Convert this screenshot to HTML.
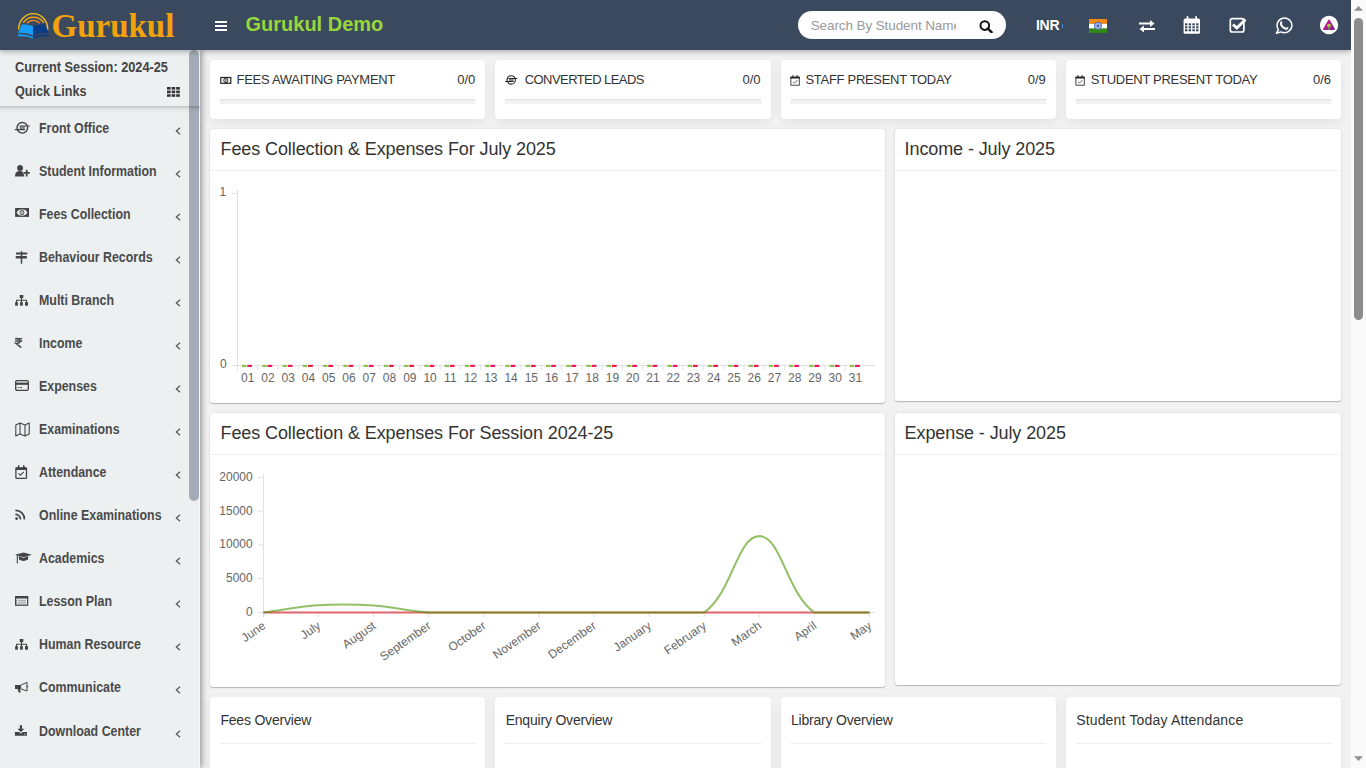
<!DOCTYPE html><html><head><meta charset="utf-8"><style>
*{margin:0;padding:0;box-sizing:border-box}
html,body{width:1366px;height:768px;overflow:hidden;background:#f2f2f2;font-family:"Liberation Sans",sans-serif}
.a,.t,.card,.box,.prog{position:absolute}
.t{white-space:nowrap}
#hdri{position:absolute;left:0;top:0;width:1366px;height:50px;z-index:3}
#hdr{position:absolute;left:0;top:0;width:1351px;height:50px;background:#3b495e;box-shadow:0 1px 6px rgba(0,0,0,.35);z-index:2}
#sb{position:absolute;left:0;top:50px;width:200px;height:718px;background:#ecf0f1;box-shadow:2px 0 6px rgba(0,0,0,.38);border-right:1px solid #f6f8f8}
#sbtop{position:absolute;left:0;top:50px;width:200px;height:56px;background:#ecf0f1}
.card{background:#fff;border-radius:4px;box-shadow:0 3px 10px rgba(0,0,0,.07)}
.box{background:#fff;border-radius:3px;box-shadow:0 1px 1px rgba(0,0,0,.22),0 0 1px rgba(0,0,0,.15),0 0 4px rgba(0,0,0,.06)}
.prog{background:#f2f2f2;box-shadow:inset 0 1px 1px rgba(0,0,0,.08)}
</style></head><body><div id="hdr"></div><div id="hdri">
<svg class="a" style="left:0;top:0" width="60" height="45" viewBox="0 0 60 45">
<path d="M18.6 29.5 A14.6 15.9 0 0 1 47.8 29.5" fill="none" stroke="#f6c21c" stroke-width="1.4"/>
<path d="M23.3 22.8 A12.2 12.2 0 0 1 43.7 22.8" fill="none" stroke="#f2a514" stroke-width="1.4"/>
<path d="M27 23.3 A8.1 8.1 0 0 1 39.6 23.3" fill="none" stroke="#f08c24" stroke-width="1.3"/>
<path d="M21.8 24.2 Q28 24.4 33.1 26.2 L33.1 35.2 Q26 32.6 18 32.9 Z" fill="#169df7"/>
<path d="M18 34.3 Q26 33.9 33.1 37.1 L33.1 38.8 Q26 35.6 18 36.6 Z" fill="#169df7"/>
<path d="M44.6 24.2 Q38.4 24.4 33.1 26.2 L33.1 35.2 Q40.4 32.6 48.4 32.9 Z" fill="#0a3c88"/>
<path d="M48.4 34.3 Q40.4 33.9 33.1 37.1 L33.1 38.8 Q40.4 35.6 48.4 36.6 Z" fill="#0a3c88"/>
</svg>
<div class="t" style="left:51.5px;top:6.19px;font-size:33px;line-height:41px;font-weight:bold;color:#f2a20c;letter-spacing:0px;font-family:'Liberation Serif', serif;">Gurukul</div>
<div class="a" style="left:215px;top:21px;width:12px;height:2px;background:#fff"></div>
<div class="a" style="left:215px;top:25px;width:12px;height:2px;background:#fff"></div>
<div class="a" style="left:215px;top:29px;width:12px;height:2px;background:#fff"></div>
<div class="t" style="left:245.5px;top:11.89px;font-size:20px;line-height:25px;font-weight:bold;color:#97d73b;letter-spacing:0px;font-family:'Liberation Sans', sans-serif;">Gurukul Demo</div>
<div class="a" style="left:798px;top:11px;width:208px;height:28px;border-radius:14px;background:#fff"></div>
<div class="a" style="left:810px;top:11px;width:146px;height:28px;overflow:hidden"><div class="t" style="left:0.7px;top:6.14px;font-size:13.5px;line-height:17px;font-weight:normal;color:#9a9a9a;letter-spacing:-0.1px;font-family:'Liberation Sans', sans-serif;">Search By Student Name</div></div>
<svg class="a" style="left:979px;top:20px" width="14" height="13" viewBox="0 0 14 13">
<circle cx="5.8" cy="5.6" r="4.3" fill="none" stroke="#111" stroke-width="2"/>
<path d="M8.8 8.6 L12.6 12.2" stroke="#111" stroke-width="2.4" stroke-linecap="round"/></svg>
<div class="t" style="left:1036px;top:16.47px;font-size:14px;line-height:18px;font-weight:bold;color:#fff;letter-spacing:-0.3px;font-family:'Liberation Sans', sans-serif;">INR</div>
<div class="a" style="left:1062px;top:24px;width:1px;height:4px;background:#4a90e2"></div>
<svg class="a" style="left:1089px;top:0" width="18" height="40" viewBox="0 0 18 40">
<rect y="19" width="18" height="4.8" fill="#f28a12"/><rect y="23.8" width="18" height="4.8" fill="#fff"/><rect y="28.6" width="18" height="4.3" fill="#2f8c10"/>
<circle cx="9" cy="25.8" r="3.6" fill="#dfe6f7" stroke="#3a5cb8" stroke-width="0.9"/><path d="M9 25.8 L12.30 25.80" stroke="#3a5cb8" stroke-width="0.5"/><path d="M9 25.8 L11.86 27.45" stroke="#3a5cb8" stroke-width="0.5"/><path d="M9 25.8 L10.65 28.66" stroke="#3a5cb8" stroke-width="0.5"/><path d="M9 25.8 L9.00 29.10" stroke="#3a5cb8" stroke-width="0.5"/><path d="M9 25.8 L7.35 28.66" stroke="#3a5cb8" stroke-width="0.5"/><path d="M9 25.8 L6.14 27.45" stroke="#3a5cb8" stroke-width="0.5"/><path d="M9 25.8 L5.70 25.80" stroke="#3a5cb8" stroke-width="0.5"/><path d="M9 25.8 L6.14 24.15" stroke="#3a5cb8" stroke-width="0.5"/><path d="M9 25.8 L7.35 22.94" stroke="#3a5cb8" stroke-width="0.5"/><path d="M9 25.8 L9.00 22.50" stroke="#3a5cb8" stroke-width="0.5"/><path d="M9 25.8 L10.65 22.94" stroke="#3a5cb8" stroke-width="0.5"/><path d="M9 25.8 L11.86 24.15" stroke="#3a5cb8" stroke-width="0.5"/><circle cx="9" cy="25.8" r="0.9" fill="#3a5cb8"/></svg>
<svg class="a" style="left:1138px;top:19px" width="18" height="14" viewBox="0 0 18 14">
<path d="M1 4.5 H13" stroke="#fff" stroke-width="2"/><path d="M12 1 L16.5 4.5 L12 8 Z" fill="#fff"/>
<path d="M17 10 H5" stroke="#fff" stroke-width="2"/><path d="M6 6.5 L1.5 10 L6 13.5 Z" fill="#fff"/></svg>
<svg class="a" style="left:1183px;top:15px" width="18" height="20" viewBox="0 0 18 20">
<rect x="0.6" y="3.6" width="16.4" height="15.2" rx="1.6" fill="#fff"/>
<rect x="3.6" y="0.9" width="1.8" height="4" rx="0.9" fill="#fff"/><rect x="12.2" y="0.9" width="1.8" height="4" rx="0.9" fill="#fff"/><rect x="2.00" y="8.30" width="2.4" height="2.1" fill="#3b495e"/><rect x="2.00" y="11.25" width="2.4" height="2.1" fill="#3b495e"/><rect x="2.00" y="14.20" width="2.4" height="2.1" fill="#3b495e"/><rect x="5.70" y="8.30" width="2.4" height="2.1" fill="#3b495e"/><rect x="5.70" y="11.25" width="2.4" height="2.1" fill="#3b495e"/><rect x="5.70" y="14.20" width="2.4" height="2.1" fill="#3b495e"/><rect x="9.40" y="8.30" width="2.4" height="2.1" fill="#3b495e"/><rect x="9.40" y="11.25" width="2.4" height="2.1" fill="#3b495e"/><rect x="9.40" y="14.20" width="2.4" height="2.1" fill="#3b495e"/><rect x="13.10" y="8.30" width="2.4" height="2.1" fill="#3b495e"/><rect x="13.10" y="11.25" width="2.4" height="2.1" fill="#3b495e"/><rect x="13.10" y="14.20" width="2.4" height="2.1" fill="#3b495e"/></svg>
<svg class="a" style="left:1229px;top:17px" width="19" height="16" viewBox="0 0 19 16">
<rect x="1.3" y="1.6" width="13.6" height="13.4" rx="2" fill="none" stroke="#fff" stroke-width="1.7"/>
<path d="M4 7.5 L7.8 11 L16.5 2.5" fill="none" stroke="#fff" stroke-width="2.8"/></svg>
<svg class="a" style="left:1275px;top:17px" width="18" height="17" viewBox="0 0 18 17">
<path d="M3.4 12.6 A7.4 7.4 0 1 1 6 14.9 L1.5 16.2 Z" fill="none" stroke="#fff" stroke-width="1.5" stroke-linejoin="round"/>
<path d="M6.4 5.3 Q5.5 6.2 6.2 8 Q7.6 10.6 10.6 11.7 Q12 12.1 12.5 11.1" fill="none" stroke="#fff" stroke-width="2" stroke-linecap="round"/></svg>
<svg class="a" style="left:1319px;top:15px" width="20" height="20" viewBox="0 0 20 20">
<circle cx="10" cy="10" r="9.2" fill="#fff"/>
<defs><linearGradient id="ag" x1="0" y1="0" x2="1" y2="1"><stop offset="0" stop-color="#d0158c"/><stop offset="1" stop-color="#8a1f90"/></linearGradient></defs><path d="M10 5.2 L15.2 14.2 H4.8 Z" fill="url(#ag)" stroke="url(#ag)" stroke-width="1.4" stroke-linejoin="round"/>
<circle cx="10" cy="10.6" r="1.8" fill="#b5d93a"/><rect x="9.3" y="10.8" width="1.4" height="3.9" fill="#5fb03c"/></svg>
</div>
<div id="sb"></div>
<div id="sbtop"></div>
<div class="t" style="left:15.4px;top:58.37px;font-size:14px;line-height:18px;font-weight:bold;color:#444;letter-spacing:0px;font-family:'Liberation Sans', sans-serif;transform:scaleX(0.91);transform-origin:0 0;">Current Session: 2024-25</div>
<div class="t" style="left:15.4px;top:82.37px;font-size:14px;line-height:18px;font-weight:bold;color:#444;letter-spacing:0px;font-family:'Liberation Sans', sans-serif;transform:scaleX(0.9);transform-origin:0 0;">Quick Links</div>
<svg class="a" style="left:167px;top:87px" width="14" height="10" viewBox="0 0 14 10"><rect x="0.0" y="0.0" width="3.6" height="2.6" fill="#333"/><rect x="0.0" y="3.6" width="3.6" height="2.6" fill="#333"/><rect x="0.0" y="7.2" width="3.6" height="2.6" fill="#333"/><rect x="4.6" y="0.0" width="3.6" height="2.6" fill="#333"/><rect x="4.6" y="3.6" width="3.6" height="2.6" fill="#333"/><rect x="4.6" y="7.2" width="3.6" height="2.6" fill="#333"/><rect x="9.2" y="0.0" width="3.6" height="2.6" fill="#333"/><rect x="9.2" y="3.6" width="3.6" height="2.6" fill="#333"/><rect x="9.2" y="7.2" width="3.6" height="2.6" fill="#333"/></svg>
<svg class="a" style="left:15px;top:121px" width="18" height="15" viewBox="0 0 18 15" overflow="visible"><circle cx="7.3" cy="6.8" r="5.3" fill="none" stroke="#444" stroke-width="1.4"/><rect x="4.6" y="5.2" width="5.2" height="3.3" fill="#888"/><path d="M4.6 5 H14.8 M-0.2 8.7 H9.9" stroke="#444" stroke-width="1.2"/></svg>
<div class="t" style="left:38.6px;top:119.37px;font-size:14px;line-height:18px;font-weight:bold;color:#4a4a4a;letter-spacing:0px;font-family:'Liberation Sans', sans-serif;transform:scaleX(0.885);transform-origin:0 0;">Front Office</div>
<svg class="a" style="left:175px;top:127px" width="6" height="8" viewBox="0 0 6 8"><path d="M5 0.7 L1.3 4 L5 7.3" fill="none" stroke="#555" stroke-width="1.2"/></svg>
<svg class="a" style="left:15px;top:164px" width="18" height="15" viewBox="0 0 18 15" overflow="visible"><circle cx="5.1" cy="4" r="2.9" fill="#444"/><path d="M0 12.5 Q0 7 4.6 7 Q8.8 7 9.2 11 V12.5 Z" fill="#444"/><path d="M8.6 8.9 H14.8 M11.7 5.7 V12.5" stroke="#ecf0f1" stroke-width="3.2"/><path d="M8.6 8.9 H14.8 M11.7 5.7 V12.5" stroke="#444" stroke-width="1.7"/></svg>
<div class="t" style="left:38.6px;top:162.37px;font-size:14px;line-height:18px;font-weight:bold;color:#4a4a4a;letter-spacing:0px;font-family:'Liberation Sans', sans-serif;transform:scaleX(0.885);transform-origin:0 0;">Student Information</div>
<svg class="a" style="left:175px;top:170px" width="6" height="8" viewBox="0 0 6 8"><path d="M5 0.7 L1.3 4 L5 7.3" fill="none" stroke="#555" stroke-width="1.2"/></svg>
<svg class="a" style="left:15px;top:207px" width="18" height="15" viewBox="0 0 18 15" overflow="visible"><rect x="0.1" y="1" width="13.9" height="8.9" fill="#444"/><path d="M1.6 5.45 Q3.3 2.2 7 2.2 Q10.7 2.2 12.4 5.45 Q10.7 8.7 7 8.7 Q3.3 8.7 1.6 5.45 Z" fill="#ecf0f1"/><ellipse cx="7" cy="5.45" rx="1.9" ry="2.4" fill="none" stroke="#444" stroke-width="0.9"/><rect x="6.6" y="4.2" width="0.8" height="2.5" fill="#444"/></svg>
<div class="t" style="left:38.6px;top:205.37px;font-size:14px;line-height:18px;font-weight:bold;color:#4a4a4a;letter-spacing:0px;font-family:'Liberation Sans', sans-serif;transform:scaleX(0.885);transform-origin:0 0;">Fees Collection</div>
<svg class="a" style="left:175px;top:213px" width="6" height="8" viewBox="0 0 6 8"><path d="M5 0.7 L1.3 4 L5 7.3" fill="none" stroke="#555" stroke-width="1.2"/></svg>
<svg class="a" style="left:15px;top:250px" width="18" height="15" viewBox="0 0 18 15" overflow="visible"><path d="M6.5 1.2 V13.7" stroke="#444" stroke-width="1.5"/><path d="M1 2.5 H11.5 L12.7 3.5 L11.5 4.5 H1 Z" fill="#444"/><path d="M11.9 6 H1.4 L0.2 7.25 L1.4 8.5 H11.9 Z" fill="#444"/></svg>
<div class="t" style="left:38.6px;top:248.37px;font-size:14px;line-height:18px;font-weight:bold;color:#4a4a4a;letter-spacing:0px;font-family:'Liberation Sans', sans-serif;transform:scaleX(0.885);transform-origin:0 0;">Behaviour Records</div>
<svg class="a" style="left:175px;top:256px" width="6" height="8" viewBox="0 0 6 8"><path d="M5 0.7 L1.3 4 L5 7.3" fill="none" stroke="#555" stroke-width="1.2"/></svg>
<svg class="a" style="left:15px;top:293px" width="18" height="15" viewBox="0 0 18 15" overflow="visible"><rect x="4.7" y="2" width="3.6" height="3" fill="#444"/><path d="M6.5 5 V7.3 M1.5 9 V7.3 H11.5 V9 M6.5 7.3 V9" fill="none" stroke="#444" stroke-width="1.1"/><rect x="0.1" y="9.1" width="2.8" height="3.6" rx="0.4" fill="#444"/><rect x="5" y="9.1" width="2.8" height="3.6" rx="0.4" fill="#444"/><rect x="10" y="9.1" width="3" height="3.6" rx="0.4" fill="#444"/></svg>
<div class="t" style="left:38.6px;top:291.37px;font-size:14px;line-height:18px;font-weight:bold;color:#4a4a4a;letter-spacing:0px;font-family:'Liberation Sans', sans-serif;transform:scaleX(0.885);transform-origin:0 0;">Multi Branch</div>
<svg class="a" style="left:175px;top:299px" width="6" height="8" viewBox="0 0 6 8"><path d="M5 0.7 L1.3 4 L5 7.3" fill="none" stroke="#555" stroke-width="1.2"/></svg>
<svg class="a" style="left:15px;top:336px" width="18" height="15" viewBox="0 0 18 15" overflow="visible"><path d="M0 2.6 H7.2 M0 5 H7.2" stroke="#444" stroke-width="1.3"/><path d="M0.6 2.6 Q5 2.4 5 5 Q5 7.5 0.8 7.4 L6.3 11.7" fill="none" stroke="#444" stroke-width="1.5"/></svg>
<div class="t" style="left:38.6px;top:334.37px;font-size:14px;line-height:18px;font-weight:bold;color:#4a4a4a;letter-spacing:0px;font-family:'Liberation Sans', sans-serif;transform:scaleX(0.885);transform-origin:0 0;">Income</div>
<svg class="a" style="left:175px;top:342px" width="6" height="8" viewBox="0 0 6 8"><path d="M5 0.7 L1.3 4 L5 7.3" fill="none" stroke="#555" stroke-width="1.2"/></svg>
<svg class="a" style="left:15px;top:379px" width="18" height="15" viewBox="0 0 18 15" overflow="visible"><rect x="0.7" y="1.7" width="12.6" height="9.6" rx="1.2" fill="none" stroke="#444" stroke-width="1.3"/><rect x="0.7" y="3.6" width="12.6" height="2.2" fill="#444"/><path d="M2.5 8.6 H4 M4.8 8.6 H7" stroke="#444" stroke-width="0.9"/></svg>
<div class="t" style="left:38.6px;top:377.37px;font-size:14px;line-height:18px;font-weight:bold;color:#4a4a4a;letter-spacing:0px;font-family:'Liberation Sans', sans-serif;transform:scaleX(0.885);transform-origin:0 0;">Expenses</div>
<svg class="a" style="left:175px;top:385px" width="6" height="8" viewBox="0 0 6 8"><path d="M5 0.7 L1.3 4 L5 7.3" fill="none" stroke="#555" stroke-width="1.2"/></svg>
<svg class="a" style="left:15px;top:422px" width="18" height="15" viewBox="0 0 18 15" overflow="visible"><path d="M0.8 3 L5 1 L10 3 L14.2 1 V12 L10 14 L5 12 L0.8 14 Z M5 1 V12 M10 3 V14" fill="none" stroke="#444" stroke-width="1.1" stroke-linejoin="round"/></svg>
<div class="t" style="left:38.6px;top:420.37px;font-size:14px;line-height:18px;font-weight:bold;color:#4a4a4a;letter-spacing:0px;font-family:'Liberation Sans', sans-serif;transform:scaleX(0.885);transform-origin:0 0;">Examinations</div>
<svg class="a" style="left:175px;top:428px" width="6" height="8" viewBox="0 0 6 8"><path d="M5 0.7 L1.3 4 L5 7.3" fill="none" stroke="#555" stroke-width="1.2"/></svg>
<svg class="a" style="left:15px;top:465px" width="18" height="15" viewBox="0 0 18 15" overflow="visible"><rect x="0.9" y="3" width="10.6" height="10.3" rx="0.6" fill="none" stroke="#444" stroke-width="1.3"/><rect x="0.9" y="2.6" width="10.6" height="2.4" fill="#444"/><path d="M3.6 0.8 V3.2 M8.8 0.8 V3.2" stroke="#444" stroke-width="1.5" stroke-linecap="round"/><path d="M3.5 8.3 L5.4 10.2 L8.8 6.9" fill="none" stroke="#444" stroke-width="1.1"/></svg>
<div class="t" style="left:38.6px;top:463.37px;font-size:14px;line-height:18px;font-weight:bold;color:#4a4a4a;letter-spacing:0px;font-family:'Liberation Sans', sans-serif;transform:scaleX(0.885);transform-origin:0 0;">Attendance</div>
<svg class="a" style="left:175px;top:471px" width="6" height="8" viewBox="0 0 6 8"><path d="M5 0.7 L1.3 4 L5 7.3" fill="none" stroke="#555" stroke-width="1.2"/></svg>
<svg class="a" style="left:15px;top:508px" width="18" height="15" viewBox="0 0 18 15" overflow="visible"><circle cx="1.6" cy="10.6" r="1.4" fill="#444"/><path d="M0.4 6.3 A4.8 4.8 0 0 1 5.4 11.4 M0.4 2.3 A8.8 8.8 0 0 1 9.4 11.4" fill="none" stroke="#444" stroke-width="1.7"/></svg>
<div class="t" style="left:38.6px;top:506.37px;font-size:14px;line-height:18px;font-weight:bold;color:#4a4a4a;letter-spacing:0px;font-family:'Liberation Sans', sans-serif;transform:scaleX(0.885);transform-origin:0 0;">Online Examinations</div>
<svg class="a" style="left:175px;top:514px" width="6" height="8" viewBox="0 0 6 8"><path d="M5 0.7 L1.3 4 L5 7.3" fill="none" stroke="#555" stroke-width="1.2"/></svg>
<svg class="a" style="left:15px;top:551px" width="18" height="15" viewBox="0 0 18 15" overflow="visible"><path d="M0 3.7 L8.5 1.5 L17 3.7 L8.5 6.3 Z" fill="#444"/><path d="M3.9 5 V8.6 Q8.5 11.4 13.1 8.6 V5 L8.5 6.9 Z" fill="#444"/><path d="M2.3 4 V12.5" stroke="#444" stroke-width="1.1"/></svg>
<div class="t" style="left:38.6px;top:549.37px;font-size:14px;line-height:18px;font-weight:bold;color:#4a4a4a;letter-spacing:0px;font-family:'Liberation Sans', sans-serif;transform:scaleX(0.885);transform-origin:0 0;">Academics</div>
<svg class="a" style="left:175px;top:557px" width="6" height="8" viewBox="0 0 6 8"><path d="M5 0.7 L1.3 4 L5 7.3" fill="none" stroke="#555" stroke-width="1.2"/></svg>
<svg class="a" style="left:15px;top:594px" width="18" height="15" viewBox="0 0 18 15" overflow="visible"><rect x="0.6" y="2.6" width="12" height="8.6" fill="none" stroke="#444" stroke-width="1.2"/><rect x="0" y="2" width="13.2" height="2.5" fill="#444"/><path d="M2.8 6.3 H11 M2.8 8.1 H11 M2.8 9.9 H11" stroke="#9a9a9a" stroke-width="0.9"/><path d="M1.3 6.3 H2 M1.3 8.1 H2 M1.3 9.9 H2" stroke="#444" stroke-width="0.9"/></svg>
<div class="t" style="left:38.6px;top:592.37px;font-size:14px;line-height:18px;font-weight:bold;color:#4a4a4a;letter-spacing:0px;font-family:'Liberation Sans', sans-serif;transform:scaleX(0.885);transform-origin:0 0;">Lesson Plan</div>
<svg class="a" style="left:175px;top:600px" width="6" height="8" viewBox="0 0 6 8"><path d="M5 0.7 L1.3 4 L5 7.3" fill="none" stroke="#555" stroke-width="1.2"/></svg>
<svg class="a" style="left:15px;top:637px" width="18" height="15" viewBox="0 0 18 15" overflow="visible"><rect x="4.7" y="2" width="3.6" height="3" fill="#444"/><path d="M6.5 5 V7.3 M1.5 9 V7.3 H11.5 V9 M6.5 7.3 V9" fill="none" stroke="#444" stroke-width="1.1"/><rect x="0.1" y="9.1" width="2.8" height="3.6" rx="0.4" fill="#444"/><rect x="5" y="9.1" width="2.8" height="3.6" rx="0.4" fill="#444"/><rect x="10" y="9.1" width="3" height="3.6" rx="0.4" fill="#444"/></svg>
<div class="t" style="left:38.6px;top:635.37px;font-size:14px;line-height:18px;font-weight:bold;color:#4a4a4a;letter-spacing:0px;font-family:'Liberation Sans', sans-serif;transform:scaleX(0.885);transform-origin:0 0;">Human Resource</div>
<svg class="a" style="left:175px;top:643px" width="6" height="8" viewBox="0 0 6 8"><path d="M5 0.7 L1.3 4 L5 7.3" fill="none" stroke="#555" stroke-width="1.2"/></svg>
<svg class="a" style="left:15px;top:680px" width="18" height="15" viewBox="0 0 18 15" overflow="visible"><rect x="0" y="5" width="5.6" height="4" fill="#444"/><path d="M2.6 8.8 H5 L5.7 12.5 H3.6 Z" fill="#444"/><path d="M5.6 5.2 L12 2.3 V11 L5.6 8.8 Z" fill="none" stroke="#444" stroke-width="1"/><path d="M12.2 5.6 Q13.3 6.6 12.2 7.6" fill="none" stroke="#444" stroke-width="0.9"/></svg>
<div class="t" style="left:38.6px;top:678.37px;font-size:14px;line-height:18px;font-weight:bold;color:#4a4a4a;letter-spacing:0px;font-family:'Liberation Sans', sans-serif;transform:scaleX(0.885);transform-origin:0 0;">Communicate</div>
<svg class="a" style="left:175px;top:686px" width="6" height="8" viewBox="0 0 6 8"><path d="M5 0.7 L1.3 4 L5 7.3" fill="none" stroke="#555" stroke-width="1.2"/></svg>
<svg class="a" style="left:15px;top:724px" width="18" height="15" viewBox="0 0 18 15" overflow="visible"><rect x="4.8" y="1.2" width="2.2" height="4.5" fill="#444"/><path d="M2.5 4.8 H9.3 L5.9 8.2 Z" fill="#444"/><path d="M-0.1 8 H4.3 L5.9 9.8 L7.5 8 H12 V11.7 H-0.1 Z" fill="#444"/><rect x="9" y="9.7" width="1" height="0.9" fill="#bbb"/><rect x="10.5" y="9.7" width="1" height="0.9" fill="#bbb"/></svg>
<div class="t" style="left:38.6px;top:722.37px;font-size:14px;line-height:18px;font-weight:bold;color:#4a4a4a;letter-spacing:0px;font-family:'Liberation Sans', sans-serif;transform:scaleX(0.885);transform-origin:0 0;">Download Center</div>
<svg class="a" style="left:175px;top:730px" width="6" height="8" viewBox="0 0 6 8"><path d="M5 0.7 L1.3 4 L5 7.3" fill="none" stroke="#555" stroke-width="1.2"/></svg>
<div class="a" style="left:189px;top:50px;width:10px;height:451px;border-radius:5px;background:#a3abb7"></div>
<div class="a" style="left:0;top:106px;width:200px;height:7px;background:linear-gradient(rgba(0,0,0,.2),rgba(0,0,0,.06) 40%,rgba(0,0,0,0))"></div>
<div class="card" style="left:210.0px;top:60px;width:275.25px;height:58.5px"></div>
<svg class="a" style="left:219.60px;top:68px" width="16" height="22" viewBox="0 0 16 22"><rect x="0.8" y="9.5" width="10" height="5.8" fill="none" stroke="#222" stroke-width="1.2"/><ellipse cx="5.8" cy="12.4" rx="2" ry="2.4" fill="none" stroke="#222" stroke-width="1"/><rect x="5.4" y="11" width="0.9" height="2.8" fill="#222"/></svg>
<div class="t" style="left:236.6px;top:71.90px;font-size:13px;line-height:16px;font-weight:normal;color:#333;letter-spacing:-0.3px;font-family:'Liberation Sans', sans-serif;">FEES AWAITING PAYMENT</div>
<div class="t" style="right:890.75px;top:71.90px;font-size:13px;line-height:16px;color:#333">0/0</div>
<div class="prog" style="left:220.0px;top:99px;width:255.25px;height:5px"></div>
<div class="card" style="left:495.25px;top:60px;width:275.25px;height:58.5px"></div>
<svg class="a" style="left:504.85px;top:68px" width="16" height="22" viewBox="0 0 16 22"><circle cx="6.2" cy="11.9" r="4.2" fill="none" stroke="#222" stroke-width="1.1"/><rect x="4" y="10.6" width="4.6" height="2.8" fill="#888"/><path d="M3.5 10.5 H12.2 M0.2 13.5 H8.6" stroke="#222" stroke-width="1"/></svg>
<div class="t" style="left:524.75px;top:71.90px;font-size:13px;line-height:16px;font-weight:normal;color:#333;letter-spacing:-0.57px;font-family:'Liberation Sans', sans-serif;">CONVERTED LEADS</div>
<div class="t" style="right:605.5px;top:71.90px;font-size:13px;line-height:16px;color:#333">0/0</div>
<div class="prog" style="left:505.25px;top:99px;width:255.25px;height:5px"></div>
<div class="card" style="left:780.5px;top:60px;width:275.25px;height:58.5px"></div>
<svg class="a" style="left:790.10px;top:68px" width="16" height="22" viewBox="0 0 16 22"><rect x="0.9" y="9.3" width="8.4" height="7.9" fill="none" stroke="#333" stroke-width="0.9"/><rect x="0.5" y="8.6" width="9.2" height="1.9" fill="#222"/><path d="M2.9 7 V9 M7.1 7 V9" stroke="#333" stroke-width="1"/><path d="M3 13.8 L4.4 15.2 L7.4 12" fill="none" stroke="#555" stroke-width="0.9"/></svg>
<div class="t" style="left:805.5px;top:71.90px;font-size:13px;line-height:16px;font-weight:normal;color:#333;letter-spacing:-0.3px;font-family:'Liberation Sans', sans-serif;">STAFF PRESENT TODAY</div>
<div class="t" style="right:320.25px;top:71.90px;font-size:13px;line-height:16px;color:#333">0/9</div>
<div class="prog" style="left:790.5px;top:99px;width:255.25px;height:5px"></div>
<div class="card" style="left:1065.75px;top:60px;width:275.25px;height:58.5px"></div>
<svg class="a" style="left:1075.35px;top:68px" width="16" height="22" viewBox="0 0 16 22"><rect x="0.9" y="9.3" width="8.4" height="7.9" fill="none" stroke="#333" stroke-width="0.9"/><rect x="0.5" y="8.6" width="9.2" height="1.9" fill="#222"/><path d="M2.9 7 V9 M7.1 7 V9" stroke="#333" stroke-width="1"/><path d="M3 13.8 L4.4 15.2 L7.4 12" fill="none" stroke="#555" stroke-width="0.9"/></svg>
<div class="t" style="left:1090.75px;top:71.90px;font-size:13px;line-height:16px;font-weight:normal;color:#333;letter-spacing:-0.3px;font-family:'Liberation Sans', sans-serif;">STUDENT PRESENT TODAY</div>
<div class="t" style="right:35.0px;top:71.90px;font-size:13px;line-height:16px;color:#333">0/6</div>
<div class="prog" style="left:1075.75px;top:99px;width:255.25px;height:5px"></div>
<div class="box" style="left:210px;top:129px;width:675px;height:274px"></div>
<div class="t" style="left:220.5px;top:138.05px;font-size:18px;line-height:22px;font-weight:normal;color:#333;letter-spacing:-0.1px;font-family:'Liberation Sans', sans-serif;">Fees Collection &amp; Expenses For July 2025</div>
<div class="a" style="left:210px;top:170px;width:675px;height:1px;background:#f0f0f0"></div>
<div class="box" style="left:895px;top:129px;width:446px;height:272px"></div>
<div class="t" style="left:904.6px;top:138.05px;font-size:18px;line-height:22px;font-weight:normal;color:#333;letter-spacing:-0.1px;font-family:'Liberation Sans', sans-serif;">Income - July 2025</div>
<div class="a" style="left:895px;top:170px;width:446px;height:1px;background:#f0f0f0"></div>
<div class="box" style="left:210px;top:413px;width:675px;height:274px"></div>
<div class="t" style="left:220.5px;top:422.05px;font-size:18px;line-height:22px;font-weight:normal;color:#333;letter-spacing:-0.1px;font-family:'Liberation Sans', sans-serif;">Fees Collection &amp; Expenses For Session 2024-25</div>
<div class="a" style="left:210px;top:454px;width:675px;height:1px;background:#f0f0f0"></div>
<div class="box" style="left:895px;top:413px;width:446px;height:272px"></div>
<div class="t" style="left:904.6px;top:422.05px;font-size:18px;line-height:22px;font-weight:normal;color:#333;letter-spacing:-0.1px;font-family:'Liberation Sans', sans-serif;">Expense - July 2025</div>
<div class="a" style="left:895px;top:454px;width:446px;height:1px;background:#f0f0f0"></div>
<svg class="a" style="left:0;top:0" width="1366" height="768" viewBox="0 0 1366 768"><path d="M237.5 190 V370 M232 365.5 H875 M232 193.5 H237.5" stroke="#e1e1e1" stroke-width="1" fill="none"/><path d="M237.50 365.5 V370 M257.76 365.5 V370 M278.02 365.5 V370 M298.28 365.5 V370 M318.54 365.5 V370 M338.80 365.5 V370 M359.06 365.5 V370 M379.32 365.5 V370 M399.58 365.5 V370 M419.84 365.5 V370 M440.10 365.5 V370 M460.36 365.5 V370 M480.62 365.5 V370 M500.88 365.5 V370 M521.14 365.5 V370 M541.40 365.5 V370 M561.66 365.5 V370 M581.92 365.5 V370 M602.18 365.5 V370 M622.44 365.5 V370 M642.70 365.5 V370 M662.96 365.5 V370 M683.22 365.5 V370 M703.48 365.5 V370 M723.74 365.5 V370 M744.00 365.5 V370 M764.26 365.5 V370 M784.52 365.5 V370 M804.78 365.5 V370 M825.04 365.5 V370 M845.30 365.5 V370 " stroke="#e1e1e1" stroke-width="1"/><rect x="242.00" y="364.8" width="4.4" height="2.2" fill="#8cc152"/><rect x="247.30" y="364.8" width="4.7" height="2.2" fill="#e9195a"/><text x="247.73" y="382" text-anchor="middle" font-size="12" fill="#666" font-family="Liberation Sans">01</text><rect x="262.26" y="364.8" width="4.4" height="2.2" fill="#8cc152"/><rect x="267.56" y="364.8" width="4.7" height="2.2" fill="#e9195a"/><text x="267.99" y="382" text-anchor="middle" font-size="12" fill="#666" font-family="Liberation Sans">02</text><rect x="282.52" y="364.8" width="4.4" height="2.2" fill="#8cc152"/><rect x="287.82" y="364.8" width="4.7" height="2.2" fill="#e9195a"/><text x="288.25" y="382" text-anchor="middle" font-size="12" fill="#666" font-family="Liberation Sans">03</text><rect x="302.78" y="364.8" width="4.4" height="2.2" fill="#8cc152"/><rect x="308.08" y="364.8" width="4.7" height="2.2" fill="#e9195a"/><text x="308.51" y="382" text-anchor="middle" font-size="12" fill="#666" font-family="Liberation Sans">04</text><rect x="323.04" y="364.8" width="4.4" height="2.2" fill="#8cc152"/><rect x="328.34" y="364.8" width="4.7" height="2.2" fill="#e9195a"/><text x="328.77" y="382" text-anchor="middle" font-size="12" fill="#666" font-family="Liberation Sans">05</text><rect x="343.30" y="364.8" width="4.4" height="2.2" fill="#8cc152"/><rect x="348.60" y="364.8" width="4.7" height="2.2" fill="#e9195a"/><text x="349.03" y="382" text-anchor="middle" font-size="12" fill="#666" font-family="Liberation Sans">06</text><rect x="363.56" y="364.8" width="4.4" height="2.2" fill="#8cc152"/><rect x="368.86" y="364.8" width="4.7" height="2.2" fill="#e9195a"/><text x="369.29" y="382" text-anchor="middle" font-size="12" fill="#666" font-family="Liberation Sans">07</text><rect x="383.82" y="364.8" width="4.4" height="2.2" fill="#8cc152"/><rect x="389.12" y="364.8" width="4.7" height="2.2" fill="#e9195a"/><text x="389.55" y="382" text-anchor="middle" font-size="12" fill="#666" font-family="Liberation Sans">08</text><rect x="404.08" y="364.8" width="4.4" height="2.2" fill="#8cc152"/><rect x="409.38" y="364.8" width="4.7" height="2.2" fill="#e9195a"/><text x="409.81" y="382" text-anchor="middle" font-size="12" fill="#666" font-family="Liberation Sans">09</text><rect x="424.34" y="364.8" width="4.4" height="2.2" fill="#8cc152"/><rect x="429.64" y="364.8" width="4.7" height="2.2" fill="#e9195a"/><text x="430.07" y="382" text-anchor="middle" font-size="12" fill="#666" font-family="Liberation Sans">10</text><rect x="444.60" y="364.8" width="4.4" height="2.2" fill="#8cc152"/><rect x="449.90" y="364.8" width="4.7" height="2.2" fill="#e9195a"/><text x="450.33" y="382" text-anchor="middle" font-size="12" fill="#666" font-family="Liberation Sans">11</text><rect x="464.86" y="364.8" width="4.4" height="2.2" fill="#8cc152"/><rect x="470.16" y="364.8" width="4.7" height="2.2" fill="#e9195a"/><text x="470.59" y="382" text-anchor="middle" font-size="12" fill="#666" font-family="Liberation Sans">12</text><rect x="485.12" y="364.8" width="4.4" height="2.2" fill="#8cc152"/><rect x="490.42" y="364.8" width="4.7" height="2.2" fill="#e9195a"/><text x="490.85" y="382" text-anchor="middle" font-size="12" fill="#666" font-family="Liberation Sans">13</text><rect x="505.38" y="364.8" width="4.4" height="2.2" fill="#8cc152"/><rect x="510.68" y="364.8" width="4.7" height="2.2" fill="#e9195a"/><text x="511.11" y="382" text-anchor="middle" font-size="12" fill="#666" font-family="Liberation Sans">14</text><rect x="525.64" y="364.8" width="4.4" height="2.2" fill="#8cc152"/><rect x="530.94" y="364.8" width="4.7" height="2.2" fill="#e9195a"/><text x="531.37" y="382" text-anchor="middle" font-size="12" fill="#666" font-family="Liberation Sans">15</text><rect x="545.90" y="364.8" width="4.4" height="2.2" fill="#8cc152"/><rect x="551.20" y="364.8" width="4.7" height="2.2" fill="#e9195a"/><text x="551.63" y="382" text-anchor="middle" font-size="12" fill="#666" font-family="Liberation Sans">16</text><rect x="566.16" y="364.8" width="4.4" height="2.2" fill="#8cc152"/><rect x="571.46" y="364.8" width="4.7" height="2.2" fill="#e9195a"/><text x="571.89" y="382" text-anchor="middle" font-size="12" fill="#666" font-family="Liberation Sans">17</text><rect x="586.42" y="364.8" width="4.4" height="2.2" fill="#8cc152"/><rect x="591.72" y="364.8" width="4.7" height="2.2" fill="#e9195a"/><text x="592.15" y="382" text-anchor="middle" font-size="12" fill="#666" font-family="Liberation Sans">18</text><rect x="606.68" y="364.8" width="4.4" height="2.2" fill="#8cc152"/><rect x="611.98" y="364.8" width="4.7" height="2.2" fill="#e9195a"/><text x="612.41" y="382" text-anchor="middle" font-size="12" fill="#666" font-family="Liberation Sans">19</text><rect x="626.94" y="364.8" width="4.4" height="2.2" fill="#8cc152"/><rect x="632.24" y="364.8" width="4.7" height="2.2" fill="#e9195a"/><text x="632.67" y="382" text-anchor="middle" font-size="12" fill="#666" font-family="Liberation Sans">20</text><rect x="647.20" y="364.8" width="4.4" height="2.2" fill="#8cc152"/><rect x="652.50" y="364.8" width="4.7" height="2.2" fill="#e9195a"/><text x="652.93" y="382" text-anchor="middle" font-size="12" fill="#666" font-family="Liberation Sans">21</text><rect x="667.46" y="364.8" width="4.4" height="2.2" fill="#8cc152"/><rect x="672.76" y="364.8" width="4.7" height="2.2" fill="#e9195a"/><text x="673.19" y="382" text-anchor="middle" font-size="12" fill="#666" font-family="Liberation Sans">22</text><rect x="687.72" y="364.8" width="4.4" height="2.2" fill="#8cc152"/><rect x="693.02" y="364.8" width="4.7" height="2.2" fill="#e9195a"/><text x="693.45" y="382" text-anchor="middle" font-size="12" fill="#666" font-family="Liberation Sans">23</text><rect x="707.98" y="364.8" width="4.4" height="2.2" fill="#8cc152"/><rect x="713.28" y="364.8" width="4.7" height="2.2" fill="#e9195a"/><text x="713.71" y="382" text-anchor="middle" font-size="12" fill="#666" font-family="Liberation Sans">24</text><rect x="728.24" y="364.8" width="4.4" height="2.2" fill="#8cc152"/><rect x="733.54" y="364.8" width="4.7" height="2.2" fill="#e9195a"/><text x="733.97" y="382" text-anchor="middle" font-size="12" fill="#666" font-family="Liberation Sans">25</text><rect x="748.50" y="364.8" width="4.4" height="2.2" fill="#8cc152"/><rect x="753.80" y="364.8" width="4.7" height="2.2" fill="#e9195a"/><text x="754.23" y="382" text-anchor="middle" font-size="12" fill="#666" font-family="Liberation Sans">26</text><rect x="768.76" y="364.8" width="4.4" height="2.2" fill="#8cc152"/><rect x="774.06" y="364.8" width="4.7" height="2.2" fill="#e9195a"/><text x="774.49" y="382" text-anchor="middle" font-size="12" fill="#666" font-family="Liberation Sans">27</text><rect x="789.02" y="364.8" width="4.4" height="2.2" fill="#8cc152"/><rect x="794.32" y="364.8" width="4.7" height="2.2" fill="#e9195a"/><text x="794.75" y="382" text-anchor="middle" font-size="12" fill="#666" font-family="Liberation Sans">28</text><rect x="809.28" y="364.8" width="4.4" height="2.2" fill="#8cc152"/><rect x="814.58" y="364.8" width="4.7" height="2.2" fill="#e9195a"/><text x="815.01" y="382" text-anchor="middle" font-size="12" fill="#666" font-family="Liberation Sans">29</text><rect x="829.54" y="364.8" width="4.4" height="2.2" fill="#8cc152"/><rect x="834.84" y="364.8" width="4.7" height="2.2" fill="#e9195a"/><text x="835.27" y="382" text-anchor="middle" font-size="12" fill="#666" font-family="Liberation Sans">30</text><rect x="849.80" y="364.8" width="4.4" height="2.2" fill="#8cc152"/><rect x="855.10" y="364.8" width="4.7" height="2.2" fill="#e9195a"/><text x="855.53" y="382" text-anchor="middle" font-size="12" fill="#666" font-family="Liberation Sans">31</text><text x="226.8" y="367.8" text-anchor="end" font-size="12" fill="#666" font-family="Liberation Sans">0</text><text x="226.3" y="196" text-anchor="end" font-size="12" fill="#666" font-family="Liberation Sans">1</text><path d="M263.5 474 V617 M258 612.5 H875" stroke="#e1e1e1" stroke-width="1" fill="none"/><path d="M258 612.50 H263.5" stroke="#e1e1e1" stroke-width="1"/><text x="252.7" y="615.90" text-anchor="end" font-size="12" fill="#666" font-family="Liberation Sans">0</text><path d="M258 578.73 H263.5" stroke="#e1e1e1" stroke-width="1"/><text x="252.7" y="582.12" text-anchor="end" font-size="12" fill="#666" font-family="Liberation Sans">5000</text><path d="M258 544.95 H263.5" stroke="#e1e1e1" stroke-width="1"/><text x="252.7" y="548.35" text-anchor="end" font-size="12" fill="#666" font-family="Liberation Sans">10000</text><path d="M258 511.17 H263.5" stroke="#e1e1e1" stroke-width="1"/><text x="252.7" y="514.57" text-anchor="end" font-size="12" fill="#666" font-family="Liberation Sans">15000</text><path d="M258 477.40 H263.5" stroke="#e1e1e1" stroke-width="1"/><text x="252.7" y="480.80" text-anchor="end" font-size="12" fill="#666" font-family="Liberation Sans">20000</text><path d="M263.40 612.5 V617.5" stroke="#e1e1e1" stroke-width="1"/><text x="266.40" y="627.50" text-anchor="end" font-size="12" fill="#666" font-family="Liberation Sans" transform="rotate(-35 266.40 627.50)">June</text><path d="M318.50 612.5 V617.5" stroke="#e1e1e1" stroke-width="1"/><text x="321.50" y="627.50" text-anchor="end" font-size="12" fill="#666" font-family="Liberation Sans" transform="rotate(-35 321.50 627.50)">July</text><path d="M373.60 612.5 V617.5" stroke="#e1e1e1" stroke-width="1"/><text x="376.60" y="627.50" text-anchor="end" font-size="12" fill="#666" font-family="Liberation Sans" transform="rotate(-35 376.60 627.50)">August</text><path d="M428.70 612.5 V617.5" stroke="#e1e1e1" stroke-width="1"/><text x="431.70" y="627.50" text-anchor="end" font-size="12" fill="#666" font-family="Liberation Sans" transform="rotate(-35 431.70 627.50)">September</text><path d="M483.80 612.5 V617.5" stroke="#e1e1e1" stroke-width="1"/><text x="486.80" y="627.50" text-anchor="end" font-size="12" fill="#666" font-family="Liberation Sans" transform="rotate(-35 486.80 627.50)">October</text><path d="M538.90 612.5 V617.5" stroke="#e1e1e1" stroke-width="1"/><text x="541.90" y="627.50" text-anchor="end" font-size="12" fill="#666" font-family="Liberation Sans" transform="rotate(-35 541.90 627.50)">November</text><path d="M594.00 612.5 V617.5" stroke="#e1e1e1" stroke-width="1"/><text x="597.00" y="627.50" text-anchor="end" font-size="12" fill="#666" font-family="Liberation Sans" transform="rotate(-35 597.00 627.50)">December</text><path d="M649.10 612.5 V617.5" stroke="#e1e1e1" stroke-width="1"/><text x="652.10" y="627.50" text-anchor="end" font-size="12" fill="#666" font-family="Liberation Sans" transform="rotate(-35 652.10 627.50)">January</text><path d="M704.20 612.5 V617.5" stroke="#e1e1e1" stroke-width="1"/><text x="707.20" y="627.50" text-anchor="end" font-size="12" fill="#666" font-family="Liberation Sans" transform="rotate(-35 707.20 627.50)">February</text><path d="M759.30 612.5 V617.5" stroke="#e1e1e1" stroke-width="1"/><text x="762.30" y="627.50" text-anchor="end" font-size="12" fill="#666" font-family="Liberation Sans" transform="rotate(-35 762.30 627.50)">March</text><path d="M814.40 612.5 V617.5" stroke="#e1e1e1" stroke-width="1"/><text x="817.40" y="627.50" text-anchor="end" font-size="12" fill="#666" font-family="Liberation Sans" transform="rotate(-35 817.40 627.50)">April</text><path d="M869.50 612.5 V617.5" stroke="#e1e1e1" stroke-width="1"/><text x="872.50" y="627.50" text-anchor="end" font-size="12" fill="#666" font-family="Liberation Sans" transform="rotate(-35 872.50 627.50)">May</text><path d="M263.40 612.50 C285.44 612.50 296.46 612.50 318.50 612.50 C340.54 612.50 351.56 612.50 373.60 612.50 C395.64 612.50 406.66 612.50 428.70 612.50 C450.74 612.50 461.76 612.50 483.80 612.50 C505.84 612.50 516.86 612.50 538.90 612.50 C560.94 612.50 571.96 612.50 594.00 612.50 C616.04 612.50 627.06 612.50 649.10 612.50 C671.14 612.50 682.16 612.50 704.20 612.50 C726.24 612.50 737.26 612.50 759.30 612.50 C781.34 612.50 792.36 612.50 814.40 612.50 C836.44 612.50 847.46 612.50 869.50 612.50" fill="none" stroke="#e2646e" stroke-width="2.2"/><path d="M263.40 612.50 C285.44 609.58 296.36 606.62 318.50 605.20 C340.44 603.81 351.65 604.02 373.60 605.47 C395.73 606.94 406.57 611.09 428.70 612.50 C450.65 612.50 461.76 612.50 483.80 612.50 C505.84 612.50 516.86 612.50 538.90 612.50 C560.94 612.50 571.96 612.50 594.00 612.50 C616.04 612.50 627.06 612.50 649.10 612.50 C671.14 612.50 687.93 612.50 704.20 612.50 C732.01 593.24 737.26 536.17 759.30 536.17 C781.34 536.17 786.59 593.24 814.40 612.50 C830.67 612.50 847.46 612.50 869.50 612.50" fill="none" stroke="rgba(75,150,0,0.6)" stroke-width="2.1"/></svg>
<div class="card" style="left:210.0px;top:697px;width:275.25px;height:100px"></div>
<div class="t" style="left:220.4px;top:711.17px;font-size:14px;line-height:18px;font-weight:normal;color:#333;letter-spacing:-0.2px;font-family:'Liberation Sans', sans-serif;">Fees Overview</div>
<div class="a" style="left:220.0px;top:743px;width:255.25px;height:1px;background:#eeeeee"></div>
<div class="card" style="left:495.25px;top:697px;width:275.25px;height:100px"></div>
<div class="t" style="left:505.65px;top:711.17px;font-size:14px;line-height:18px;font-weight:normal;color:#333;letter-spacing:-0.2px;font-family:'Liberation Sans', sans-serif;">Enquiry Overview</div>
<div class="a" style="left:505.25px;top:743px;width:255.25px;height:1px;background:#eeeeee"></div>
<div class="card" style="left:780.5px;top:697px;width:275.25px;height:100px"></div>
<div class="t" style="left:790.9px;top:711.17px;font-size:14px;line-height:18px;font-weight:normal;color:#333;letter-spacing:-0.2px;font-family:'Liberation Sans', sans-serif;">Library Overview</div>
<div class="a" style="left:790.5px;top:743px;width:255.25px;height:1px;background:#eeeeee"></div>
<div class="card" style="left:1065.75px;top:697px;width:275.25px;height:100px"></div>
<div class="t" style="left:1076.15px;top:711.17px;font-size:14px;line-height:18px;font-weight:normal;color:#333;letter-spacing:0.17px;font-family:'Liberation Sans', sans-serif;">Student Today Attendance</div>
<div class="a" style="left:1075.75px;top:743px;width:255.25px;height:1px;background:#eeeeee"></div>
<div class="a" style="left:1351px;top:0;width:15px;height:768px;background:#fafafa;z-index:5"></div>
<div class="a" style="left:1354px;top:18px;width:9px;height:302px;border-radius:4.5px;background:#8c8c8c;z-index:6"></div>
<svg class="a" style="left:1351px;top:0;z-index:6" width="15" height="768" viewBox="0 0 15 768"><path d="M3 10.7 L7.5 5.9 L12 10.7 Z" fill="#8f8f8f"/><path d="M3 756.2 L7.5 761 L12 756.2 Z" fill="#8f8f8f"/></svg></body></html>
